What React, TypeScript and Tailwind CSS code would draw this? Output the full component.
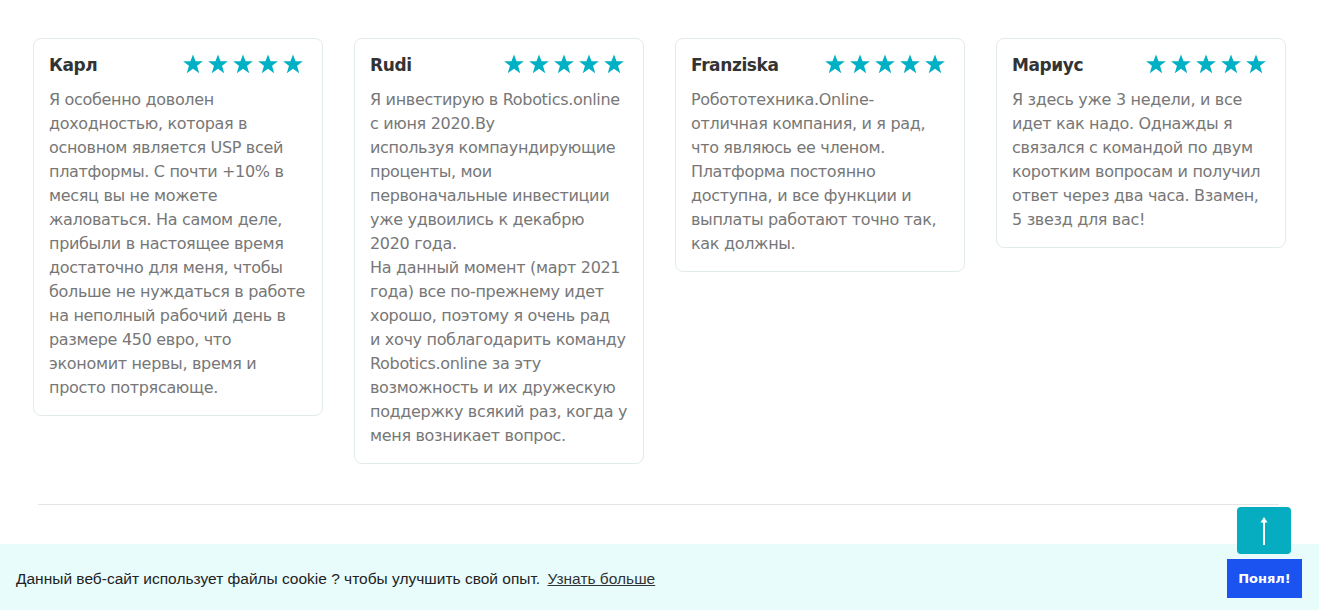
type Review = { name: string; lines: string[] };

const reviews: Review[] = [
  {
    name: 'Карл',
    lines: [
      'Я особенно доволен',
      'доходностью, которая в',
      'основном является USP всей',
      'платформы. С почти +10% в',
      'месяц вы не можете',
      'жаловаться. На самом деле,',
      'прибыли в настоящее время',
      'достаточно для меня, чтобы',
      'больше не нуждаться в работе',
      'на неполный рабочий день в',
      'размере 450 евро, что',
      'экономит нервы, время и',
      'просто потрясающе.',
    ],
  },
  {
    name: 'Rudi',
    lines: [
      'Я инвестирую в Robotics.online',
      'с июня 2020.By',
      'используя компаундирующие',
      'проценты, мои',
      'первоначальные инвестиции',
      'уже удвоились к декабрю',
      '2020 года.',
      'На данный момент (март 2021',
      'года) все по-прежнему идет',
      'хорошо, поэтому я очень рад',
      'и хочу поблагодарить команду',
      'Robotics.online за эту',
      'возможность и их дружескую',
      'поддержку всякий раз, когда у',
      'меня возникает вопрос.',
    ],
  },
  {
    name: 'Franziska',
    lines: [
      'Робототехника.Online-',
      'отличная компания, и я рад,',
      'что являюсь ее членом.',
      'Платформа постоянно',
      'доступна, и все функции и',
      'выплаты работают точно так,',
      'как должны.',
    ],
  },
  {
    name: 'Мариус',
    lines: [
      'Я здесь уже 3 недели, и все',
      'идет как надо. Однажды я',
      'связался с командой по двум',
      'коротким вопросам и получил',
      'ответ через два часа. Взамен,',
      '5 звезд для вас!',
    ],
  },
];

const Star = () => (
  <svg viewBox="0 0 24 24" className="h-[22px] w-[22px]" fill="#00b0c4">
    <polygon points="12,1.5 14.8,9 22.8,9 16.4,14 18.8,22 12,17.2 5.2,22 7.6,14 1.2,9 9.2,9" />
  </svg>
);

const ReviewCard = ({ review }: { review: Review }) => (
  <div className="w-[290px] shrink-0 rounded-[8px] border border-[#e2eaeb] bg-white pl-[15px] pr-[18px] pt-[12px] pb-[15px]">
    <div className="flex h-[26px] items-center justify-between">
      <span className="pt-[3px] text-[17px] font-bold tracking-[-0.4px] text-[#333]">{review.name}</span>
      <div className="flex gap-[3px]">
        {[0, 1, 2, 3, 4].map((i) => (
          <Star key={i} />
        ))}
      </div>
    </div>
    <div className="mt-[11px] text-[16px] leading-[24px] tracking-[-0.32px] text-[#777]">
      {review.lines.map((line, i) => (
        <div key={i} className="whitespace-nowrap">
          {line}
        </div>
      ))}
    </div>
  </div>
);

export default function App() {
  return (
    <div
      className="min-h-[610px] bg-white"
      style={{ fontFamily: '"DejaVu Sans", sans-serif' }}
    >
      <section className="px-[33px] pt-[38px]">
        <div className="flex items-start gap-[31px]">
          {reviews.map((r) => (
            <ReviewCard key={r.name} review={r} />
          ))}
        </div>
        <div className="ml-[5px] mr-[7px] mt-[40px] h-px bg-[#e4e4e4]" />
      </section>

      <div className="fixed bottom-0 left-0 right-0 z-10 flex h-[66px] items-center justify-between bg-[#e8fcfc] pl-[16px] pr-[17px] font-['Liberation_Sans',sans-serif]">
        <p className="pt-[3px] text-[15.5px] text-[#222]">
          Данный веб-сайт использует файлы cookie ? чтобы улучшить свой опыт.{' '}
          <a href="#" className="ml-[3px] text-[#333] underline">
            Узнать больше
          </a>
        </p>
        <button className="mt-[3px] h-[39px] w-[75px] bg-[#1a53f0] font-['DejaVu_Sans',sans-serif] text-[13px] font-bold text-white">
          Понял!
        </button>
      </div>

      <button className="fixed bottom-[56px] right-[28px] z-20 flex h-[47px] w-[54px] items-center justify-center rounded-[4px] bg-[#06adc1]">
        <svg viewBox="0 0 12 30" className="h-[30px] w-[12px]" fill="none">
          <path d="M6 29V3" stroke="#fff" strokeWidth="2" />
          <path d="M6 1L2.5 6.5H9.5Z" fill="#fff" />
        </svg>
      </button>
    </div>
  );
}
